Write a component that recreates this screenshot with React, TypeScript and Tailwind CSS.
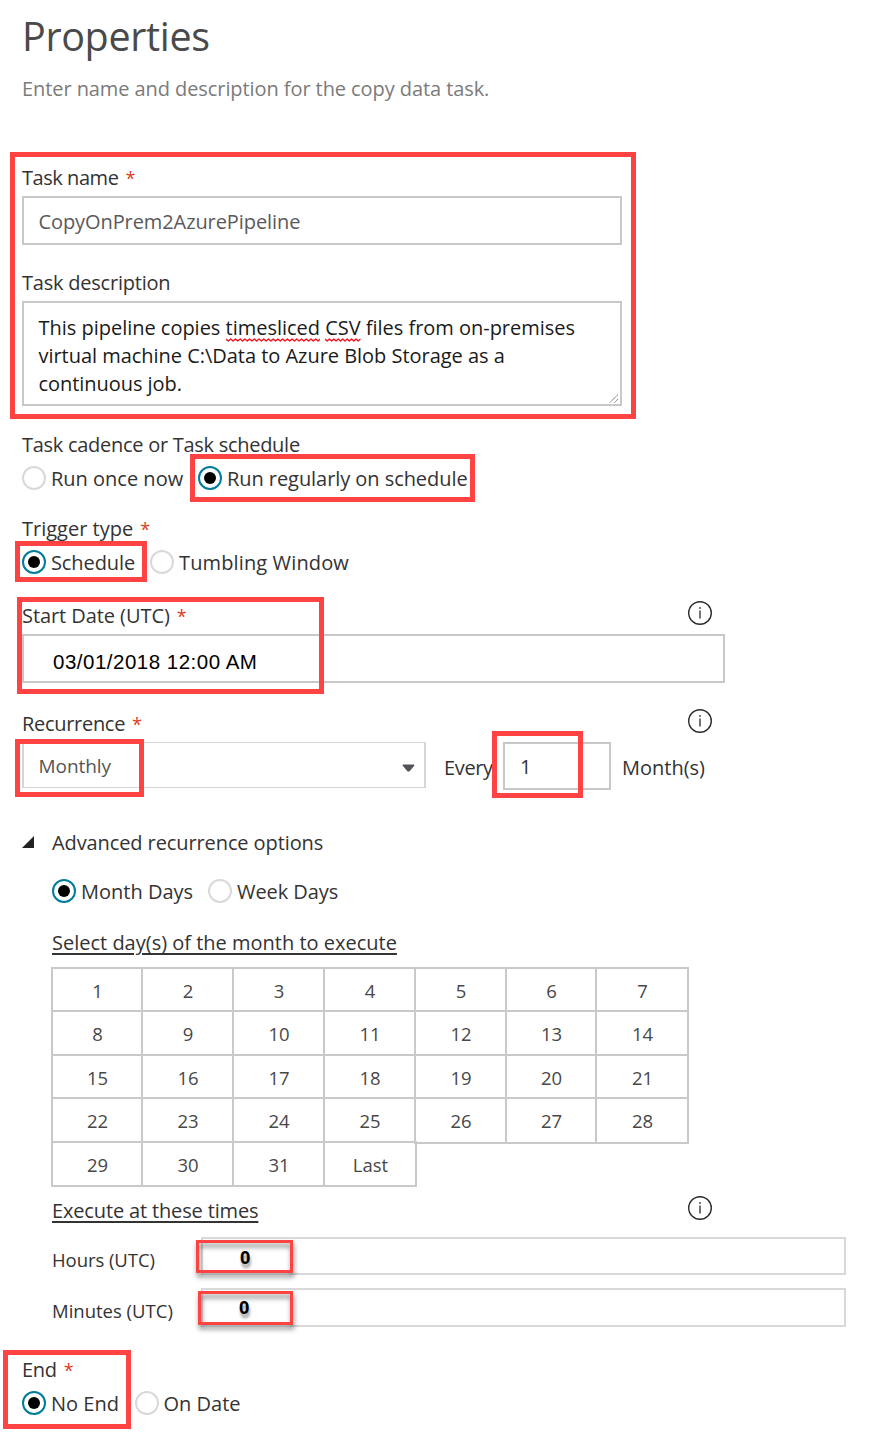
import { useState } from "react";
import type { ReactNode } from "react";

const DAYS: string[] = [
  ...Array.from({ length: 31 }, (_, i) => String(i + 1)),
  "Last",
];

function Label({
  children,
  className = "",
  required = false,
}: {
  children: ReactNode;
  className?: string;
  required?: boolean;
}) {
  return (
    <div className={`flex h-7 shrink-0 whitespace-pre pt-px text-[20px] leading-7 text-[#333] ${className}`}>
      <span>{children}</span>
      {required && <span className="ml-[7px] text-[18px] tracking-normal text-[#dd3c22]">*</span>}
    </div>
  );
}

function Misspelled({ children, width }: { children: string; width: number }) {
  const waves = Math.round(width / 4.6);
  const step = width / waves;
  const points = Array.from({ length: waves * 2 + 1 }, (_, i) => `${(i * step) / 2},${i % 2 ? 3 : 1}`);
  return (
    <span className="relative inline-block">
      {children}
      <svg className="absolute top-[24px] left-0 h-1 w-full" viewBox={`0 0 ${width} 4`} preserveAspectRatio="none" fill="none">
        <polyline points={points.join(" ")} stroke="#f5101c" strokeWidth="1.4" strokeLinejoin="round" />
      </svg>
    </span>
  );
}

function Radio({
  label,
  checked,
  onSelect,
  className = "",
}: {
  label: string;
  checked: boolean;
  onSelect: () => void;
  className?: string;
}) {
  return (
    <div
      role="radio"
      aria-checked={checked}
      onClick={onSelect}
      className={`flex h-6 shrink-0 items-center text-[20px] whitespace-pre text-[#333] ${className}`}
    >
      <span
        className={`mr-[5px] flex size-6 shrink-0 items-center justify-center rounded-full border-2 bg-white ${
          checked ? "border-[#007c9c]" : "border-[#d9d9d9]"
        }`}
      >
        {checked && <span className="mb-px size-3 rounded-full bg-black" />}
      </span>
      <span className="mt-px leading-7">{label}</span>
    </div>
  );
}

function RadioGroup({
  options,
  initial,
  className = "",
}: {
  options: { label: string; className: string }[];
  initial: number;
  className?: string;
}) {
  const [selected, setSelected] = useState(initial);
  return (
    <div role="radiogroup" className={`flex h-6 ${className}`}>
      {options.map((o, i) => (
        <Radio
          key={o.label}
          label={o.label}
          checked={i === selected}
          onSelect={() => setSelected(i)}
          className={o.className}
        />
      ))}
    </div>
  );
}

function InfoIcon() {
  return (
    <svg viewBox="0 0 24 24" className="size-6 shrink-0" fill="none">
      <circle cx="12" cy="12" r="11.3" stroke="#2b2b2b" strokeWidth="1.4" />
      <path d="M12 9.6V17.6" stroke="#444" strokeWidth="1.5" />
      <circle cx="12" cy="7" r="0.95" fill="#444" />
    </svg>
  );
}

function Highlight({ className }: { className: string }) {
  return <div className={`pointer-events-none absolute border-[#ff4343] ${className}`} />;
}

export default function App() {
  return (
    <div className="relative h-[1441px] w-[879px] overflow-hidden bg-white font-['Open_Sans','Noto_Sans',sans-serif]">
      <main className="flex flex-col pl-[22px]">
        <h1 className="mt-2 h-[55px] text-[39.5px] leading-14 tracking-[-0.35px] text-[#4a4a4a]">
          Properties
        </h1>
        <p className="mt-3 h-[27px] text-[20px] leading-7 tracking-[-0.08px] text-[#7b7b7b]">
          Enter name and description for the copy data task.
        </p>

        <Label required className="mt-[61px] tracking-[-0.45px]">Task name</Label>
        <div className="mt-[5px] flex h-[49px] w-[600px] items-center border-2 border-[#c8c8c8] pt-0.5 pl-[14.5px] text-[20px] tracking-[-0.09px] text-[#5a5a5a]">
          CopyOnPrem2AzurePipeline
        </div>

        <Label className="mt-[23px] tracking-[-0.22px]">Task description</Label>
        <div className="mt-[5px] flex h-[105px] w-[600px] items-start justify-between border-2 border-[#c8c8c8] pt-[11px] pl-[14.5px] text-[20px] leading-7 text-[#1a1a1a]">
          <div className="whitespace-pre">
            <p className="h-7 tracking-[-0.02px]">
              This pipeline copies <Misspelled width={94}>timesliced</Misspelled>{" "}
              <Misspelled width={37}>CSV</Misspelled> files from on-premises
            </p>
            <p className="h-7 tracking-[-0.03px]">virtual machine C:\Data to Azure Blob Storage as a</p>
            <p className="h-7 tracking-[-0.05px]">continuous job.</p>
          </div>
          <svg viewBox="0 0 10 10" className="mr-px mb-px size-[10px] self-end" fill="none" stroke="#555" strokeWidth="1">
            <path d="M1 9.5L9 1.5M5.5 9.5L9 6" strokeDasharray="1.2 0.5" />
          </svg>
        </div>

        <Label className="mt-6 tracking-[-0.28px]">Task cadence or Task schedule</Label>
        <RadioGroup
          initial={1}
          className="mt-2"
          options={[
            { label: "Run once now", className: "w-44" },
            { label: "Run regularly on schedule", className: "tracking-[-0.06px]" },
          ]}
        />

        <Label required className="mt-6">Trigger type</Label>
        <RadioGroup
          initial={0}
          className="mt-2"
          options={[
            { label: "Schedule", className: "w-32 tracking-[-0.1px]" },
            { label: "Tumbling Window", className: "tracking-[0.13px]" },
          ]}
        />

        <div className="mt-[27px] flex h-7 w-[690px] items-start justify-between">
          <Label required className="tracking-[-0.07px]">Start Date (UTC)</Label>
          <InfoIcon />
        </div>
        <div className="mt-[5px] flex h-[49px] w-[703px] items-center border-2 border-[#c8c8c8] pt-[8px] pl-[29px] font-['Liberation_Sans',sans-serif] text-[20.5px] tracking-[0.5px] text-black">
          03/01/2018 12:00 AM
        </div>

        <div className="mt-[26px] flex h-7 w-[690px] items-start justify-between">
          <Label required className="tracking-[-0.3px]">Recurrence</Label>
          <InfoIcon />
        </div>
        <div className="mt-[5px] flex h-12 items-start text-[20px] text-[#333]">
          <div className="flex h-[46px] w-[404px] items-center justify-between border-x-2 border-y border-[#d6d6d6] pr-[9px] pl-[14.5px] text-[19px] tracking-[-0.05px] text-[#555]">
            <span className="mt-[3px]">Monthly</span>
            <svg viewBox="0 0 13 8" className="mt-[5px] h-2 w-[13px]" fill="#505458">
              <path d="M1.2 0.5H11.8Q13 0.8 12.2 1.8L7.6 7.2Q6.5 8 5.4 7.2L0.8 1.8Q0 0.8 1.2 0.5Z" />
            </svg>
          </div>
          <span className="mt-3 ml-[18px] w-[59px] leading-7 tracking-[-0.35px]">Every</span>
          <div className="flex h-12 w-[108px] items-center border-2 border-[#c8c8c8] pt-px pl-[15px]">1</div>
          <span className="mt-3 ml-[11px] leading-7">Month(s)</span>
        </div>

        <div className="mt-[38px] flex h-7 items-start">
          <svg viewBox="0 0 12 12" className="mt-2 mr-[18px] size-3" fill="#222">
            <path d="M12 0V12H0Z" />
          </svg>
          <Label className="tracking-[-0.1px]">Advanced recurrence options</Label>
        </div>

        <section className="flex flex-col pl-[30px]">
          <RadioGroup
            initial={0}
            className="mt-[23px]"
            options={[
              { label: "Month Days", className: "w-39" },
              { label: "Week Days", className: "tracking-[-0.06px]" },
            ]}
          />

          <Label className="mt-[25px] underline decoration-2 underline-offset-3">
            Select day(s) of the month to execute
          </Label>
          <div className="mt-[11px] -ml-px grid h-[220px] w-[638px] grid-cols-[90px_91px_91px_91px_91px_90px_92px] grid-rows-[43px_44px_43px_44px_44px]">
            {DAYS.map((day, i) => (
              <div
                key={day}
                className={`flex items-center justify-center border-2 border-[#c9c9c9] pl-px text-[18.5px] leading-6 text-[#484848] ${
                  i === 31 ? "-mr-[3px]" : "-mr-0.5"
                } ${i > 24 && i < 28 ? "-mb-[3px]" : "-mb-0.5"} ${
                  i < 7 || (i > 13 && i < 21) ? "pt-0.5" : "pt-px"
                }`}
              >
                {day}
              </div>
            ))}
          </div>

          <div className="mt-[9px] flex h-7 w-[660px] items-start justify-between">
            <Label className="tracking-[-0.15px] underline decoration-2 underline-offset-3">
              Execute at these times
            </Label>
            <InfoIcon />
          </div>

          <div className="mt-[13px] flex h-[38px] w-[794px] text-[18.5px] text-[#333]">
            <span className="mt-[9px] w-[149px] leading-7 tracking-[-0.06px]">Hours (UTC)</span>
            <div className="flex flex-1 border-2 border-[#d9d9d9] pl-[37px] text-[18px] leading-[36px] font-bold text-black [text-shadow:1px_4px_3px_rgba(0,0,0,0.4)]">
              0
            </div>
          </div>
          <div className="mt-[13px] flex h-[39px] w-[794px] text-[18.5px] text-[#333]">
            <span className="mt-[9px] w-[149px] leading-7">Minutes (UTC)</span>
            <div className="flex flex-1 border-2 border-[#d9d9d9] pl-[36px] text-[18px] leading-[34px] font-bold text-black [text-shadow:1px_4px_3px_rgba(0,0,0,0.4)]">
              0
            </div>
          </div>
        </section>

        <Label required className="mt-7 tracking-[-0.3px]">End</Label>
        <RadioGroup
          initial={0}
          className="mt-2"
          options={[
            { label: "No End", className: "w-[112.5px]" },
            { label: "On Date", className: "" },
          ]}
        />
      </main>

      <Highlight className="top-[152px] left-[10px] h-[267px] w-[626px] border-5" />
      <Highlight className="top-[454px] left-[190px] h-12 w-[285px] border-5" />
      <Highlight className="top-[541px] left-[15px] h-[41px] w-[132px] border-5" />
      <Highlight className="top-[597px] left-[17px] h-[97px] w-[307px] border-5" />
      <Highlight className="top-[739px] left-[15px] h-[58px] w-[129px] border-5" />
      <Highlight className="top-[731px] left-[492px] h-[67px] w-[91px] border-5" />
      <Highlight className="top-[1240px] left-[196px] h-[33px] w-[97px] border-3 drop-shadow-[1px_4px_2.5px_rgba(0,0,0,0.5)]" />
      <Highlight className="top-[1291px] left-[198px] h-[34px] w-[95px] border-3 drop-shadow-[1px_4px_2.5px_rgba(0,0,0,0.5)]" />
      <Highlight className="top-[1350px] left-[3px] h-[79px] w-[128px] border-5" />
    </div>
  );
}
